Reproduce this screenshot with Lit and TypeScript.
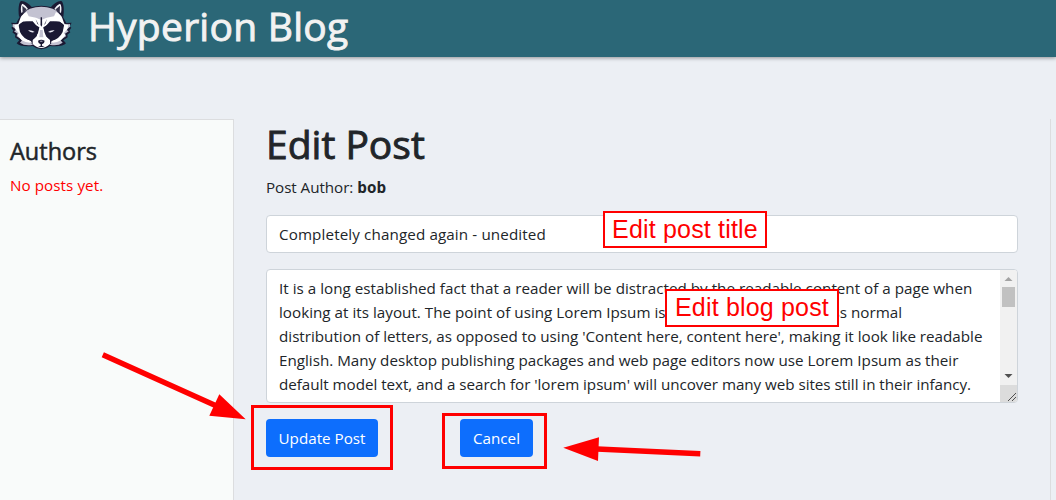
import { LitElement, html, css } from "lit";
import { customElement } from "lit/decorators.js";

const POST_LINES = [
  { text: "It is a long established fact that a reader will be distracted by the readable content of a page when", cls: "loose" },
  { text: "looking at its layout. The point of using Lorem Ipsum is that it has a more-or-less normal", cls: "loose" },
  { text: "distribution of letters, as opposed to using 'Content here, content here', making it look like readable", cls: "" },
  { text: "English. Many desktop publishing packages and web page editors now use Lorem Ipsum as their", cls: "" },
  { text: "default model text, and a search for 'lorem ipsum' will uncover many web sites still in their infancy.", cls: "tight" },
];

@customElement("raccoon-logo")
class RaccoonLogo extends LitElement {
  static styles = css`
    :host { display: block; width: 90px; height: 57px; }
    svg { display: block; }
  `;
  render() {
    return html`<svg width="90" height="57" viewBox="0 0 270 171">
      <g fill="#1b1933">
        <path d="M57 50 C54 28 56 8 63 3 C74 2 88 12 96 22 L90 45Z" />
        <path d="M190 50 C193 28 191 8 184 3 C173 2 160 12 152 22 L158 45Z" />
        <path d="M92 22 Q124 12 156 22 Q181 30 194 60 L199 69 L215 68 L209 79 L214 83 L208 92 L211 97 L202 104 L203 112 L190 121 L198 130 Q189 141 150 138 Q138 148 124 148 Q110 148 98 138 Q59 141 50 130 L58 121 L45 112 L46 104 L37 97 L40 92 L34 83 L39 79 L33 68 L49 69 L54 60 Q67 30 92 22Z" />
      </g>
      <path fill="#f5f5fa" d="M64 39 C61 25 63 15 67 11 C75 14 80 20 84 27Z M183 39 C186 25 184 15 180 11 C172 14 167 20 163 27Z" />
      <path fill="#34324a" d="M67 17 L80 28 L68 42Z M180 17 L167 28 L179 42Z" />
      <path fill="#c3c2d1" d="M90 26 Q124 15 158 26 Q180 34 188 65 L150 62 L124 88 L98 62 L60 65 Q68 34 90 26Z" />
      <path fill="#fff" d="M57 66 Q63 42 80 36 L86 49 L108 53 L124 60 L140 53 L162 49 L168 36 Q185 42 191 66 L197 80 L178 64 L150 64 L136 80 L124 86 L112 80 L98 64 L70 64 L51 80Z" />
      <path fill="#c3c2d1" d="M38 72 L54 74 L58 98 Q67 124 91 127 L99 134 Q75 139 60 128 L67 120 L49 108 L55 103 L42 94 L49 89 L38 80Z M210 72 L194 74 L190 98 Q181 124 157 127 L149 134 Q173 139 188 128 L181 120 L199 108 L193 103 L206 94 L199 89 L210 80Z" />
      <path fill="#fff" d="M43 74 L55 72 L60 96 Q70 117 92 122 L96 128 Q79 130 65 121 L51 104 L57 100 L46 88Z M205 74 L193 72 L188 96 Q178 117 156 122 L152 128 Q169 130 183 121 L197 104 L191 100 L202 88Z" />
      <path fill="#fff" d="M119 79 L129 79 L134 93 L138 109 L150 119 L150 132 Q137 144 124 144 Q111 144 98 132 L98 119 L110 109 L114 93Z" />
      <path fill="#c3c2d1" d="M120 90 L128 90 L130 112 L118 112Z" />
      <path fill="#1b1933" d="M57 74 Q67 62 91 66 L118 82 L114 99 L105 113 L94 123 Q67 115 57 74Z M191 74 Q181 62 157 66 L130 82 L134 99 L143 113 L154 123 Q181 115 191 74Z" />
      <path fill="#e9e9f1" d="M84 91 Q95 89 104 96 Q92 100 84 91Z M164 91 Q153 89 144 96 Q156 100 164 91Z" />
      <path fill="#1b1933" d="M122 52 L126 52 L126.500 75 L124 80 L121.500 75Z M107 57 L116 75 L112 71Z M141 57 L132 75 L136 71Z" />
      <path fill="#1b1933" d="M114 122 Q124 116 134 122 Q134 130 126 133 L126 137 L134 140 L124 141 L114 140 L122 137 L122 133 Q114 130 114 122Z" />
      <path fill="#85839a" d="M119 123 Q124 120 129 123 L126 126 L121 126Z" />
    </svg>`;
  }
}

@customElement("app-root")
class AppRoot extends LitElement {
  static styles = css`
    :host {
      display: flex; flex-direction: column; position: relative;
      height: 500px; overflow: hidden; box-sizing: border-box;
      background: #eceff4; color: #212529;
      font: 400 15.2px/24px "Open Sans", sans-serif;
    }
    * { box-sizing: border-box; }
    h1, h3, p { margin: 0; white-space: nowrap; }
    header {
      display: flex; flex: none; height: 57px; background: #2b6777;
      box-shadow: 0 1px 4px rgba(0, 0, 0, 0.4);
    }
    .brand {
      margin-left: -2px; padding-top: 2px; color: #f2f2f2;
      font-size: 39px; font-weight: 500; line-height: 48px; letter-spacing: 0.27px; white-space: nowrap;
      -webkit-text-stroke: 0.9px currentColor;
    }
    .layout { display: flex; flex: 1; margin-top: 62px; }
    aside {
      width: 234px; flex: none; padding: 17px 10px; background: #f9fbfa;
      border-top: 1px solid #dcdddf; border-right: 1px solid #dcdddf;
    }
    h3 {
      font-size: 23.5px; font-weight: 500; line-height: 28px; margin-bottom: 8px;
      -webkit-text-stroke: 0.5px currentColor;
    }
    .empty { color: #f00; letter-spacing: 0.07px; }
    main { width: 817px; padding: 1px 32px 0; border-right: 1px solid #dcdddf; }
    h1 {
      font-size: 39px; font-weight: 500; line-height: 48px; margin-bottom: 7px;
      -webkit-text-stroke: 0.9px currentColor;
    }
    .author { margin-bottom: 16px; letter-spacing: -0.05px; }
    .author b { letter-spacing: 0.2px; }
    .field { background: #fff; border: 1px solid #ced4da; border-radius: 4px; white-space: nowrap; }
    .title { height: 38px; padding: 6px 12px; margin-bottom: 16px; letter-spacing: 0.12px; }
    .body { height: 134px; display: flex; justify-content: space-between; overflow: hidden; }
    .text { padding: 6px 0 6px 12px; }
    .loose { letter-spacing: 0.02px; }
    .tight { letter-spacing: -0.035px; }
    .bar { width: 17px; display: flex; flex-direction: column; background: #f1f1f1; }
    .bar svg { display: block; flex: none; }
    .thumb { height: 20px; margin: 0 2px; background: #c1c1c1; }
    .track { flex: 1; }
    .actions { display: flex; gap: 82px; margin-top: 16px; }
    .btn {
      height: 38px; border: 0; border-radius: 4px; padding: 7px 0; background: #0d6efd; color: #fff;
      font: inherit; text-align: center;
    }
    .update { width: 112px; }
    .cancel { width: 73px; }
    .note {
      position: absolute; display: flex; justify-content: center; border: 2px solid #f00;
      background: #fff; color: #f00; white-space: nowrap;
      font: 25px/33px "Liberation Sans", sans-serif; letter-spacing: 0.18px;
    }
    .note-title { left: 603px; top: 211px; width: 164px; height: 37px; }
    .note-body { left: 665px; top: 289px; width: 174px; height: 38px; }
    .frame { position: absolute; border: 3px solid #f00; }
    .frame-update { left: 251px; top: 405px; width: 142px; height: 65px; }
    .frame-cancel { left: 442px; top: 413px; width: 105px; height: 56px; }
    .arrows { position: absolute; left: 0; top: 0; }
  `;
  render() {
    return html`
      <header>
        <raccoon-logo></raccoon-logo>
        <div class="brand">Hyperion Blog</div>
      </header>
      <div class="layout">
        <aside>
          <h3>Authors</h3>
          <p class="empty">No posts yet.</p>
        </aside>
        <main>
          <h1>Edit Post</h1>
          <p class="author">Post Author: <b>bob</b></p>
          <div class="field title">Completely changed again - unedited</div>
          <div class="field body">
            <div class="text">${POST_LINES.map((line) => html`<div class=${line.cls}>${line.text}</div>`)}</div>
            <div class="bar">
              <svg width="17" height="17"><path fill="#a3a3a3" d="M4.5 11 L8.5 7 L12.5 11Z" /></svg>
              <div class="thumb"></div>
              <div class="track"></div>
              <svg width="17" height="17"><path fill="#505050" d="M4.5 6 L12.5 6 L8.5 10Z" /></svg>
              <svg width="17" height="17">
                <rect width="17" height="17" fill="#dcdcdc" />
                <path stroke="#505050" fill="none" d="M8 16 L16 8 M12 16 L16 12" />
              </svg>
            </div>
          </div>
          <div class="actions">
            <button class="btn update">Update Post</button>
            <button class="btn cancel">Cancel</button>
          </div>
        </main>
      </div>
      <div class="note note-title">Edit post title</div>
      <div class="note note-body">Edit blog post</div>
      <div class="frame frame-update"></div>
      <div class="frame frame-cancel"></div>
      <svg class="arrows" width="1056" height="500" fill="#f00" stroke="#f00">
        <path stroke-width="5.4" d="M102.8 354.8 L216 405.8 M700.3 453.7 L597 449" />
        <path stroke="none" d="M245.7 419.3 L219.3 394.3 L209.3 415.7Z M563.3 447.7 L599 437.3 L598 461Z" />
      </svg>
    `;
  }
}
